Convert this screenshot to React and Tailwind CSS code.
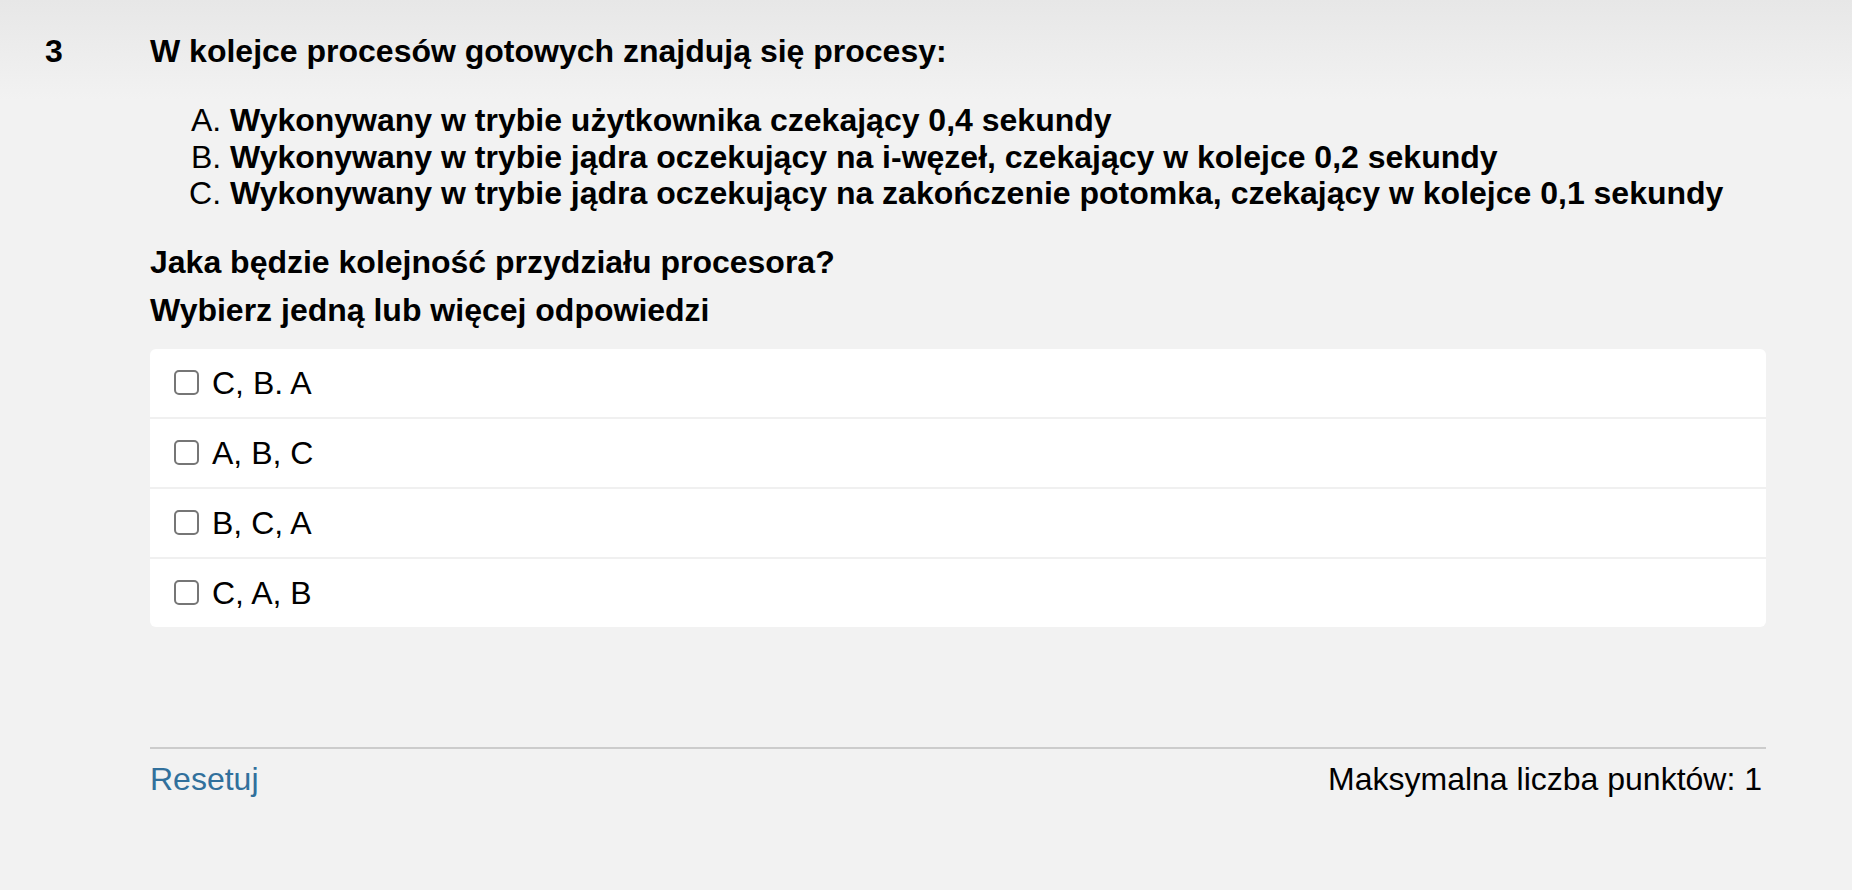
import React from "react";

const options = ["C, B. A", "A, B, C", "B, C, A", "C, A, B"];

const items = [
  "Wykonywany w trybie użytkownika czekający 0,4 sekundy",
  "Wykonywany w trybie jądra oczekujący na i-węzeł, czekający w kolejce 0,2 sekundy",
  "Wykonywany w trybie jądra oczekujący na zakończenie potomka, czekający w kolejce 0,1 sekundy",
];

export default function App() {
  return (
    <div className="min-h-[890px] w-full bg-[linear-gradient(to_bottom,#e7e7e7_0px,#f2f2f2_100px)] font-['Liberation_Sans',Arial,sans-serif] text-[32px] leading-[36.8px] text-black">
      <div className="flex pt-[33px] pl-[45px] pr-[86px]">
        <div className="w-[105px] shrink-0 font-bold">3</div>
        <div className="flex-1 min-w-0">
          <p className="font-bold">W kolejce procesów gotowych znajdują się procesy:</p>
          <ol className="mt-[32px] pl-[80px] list-[upper-alpha]">
            {items.map((t) => (
              <li key={t}>
                <strong className="font-bold">{t}</strong>
              </li>
            ))}
          </ol>
          <p className="mt-[32px] font-bold">Jaka będzie kolejność przydziału procesora?</p>
          <p className="mt-[11px] font-bold">Wybierz jedną lub więcej odpowiedzi</p>
          <div className="mt-[20px] rounded-[6px] bg-white">
            {options.map((o, i) => (
              <div
                key={o}
                className={
                  i === 0
                    ? "flex items-center gap-[13px] pl-[24px] py-[16px] leading-[36px]"
                    : "flex items-center gap-[13px] pl-[24px] py-[16px] leading-[36px] border-t-2 border-[#f0f0f0]"
                }
              >
                <span className="block w-[25px] h-[25px] rounded-[5px] border-2 border-[#767676] bg-white shrink-0" />
                <span>{o}</span>
              </div>
            ))}
          </div>
          <div className="mt-[120px] border-t-2 border-[#cccccc] pt-[12px] flex justify-between pr-[4px]">
            <a className="text-[#31709c] cursor-pointer">Resetuj</a>
            <span>Maksymalna liczba punktów: 1</span>
          </div>
        </div>
      </div>
    </div>
  );
}
